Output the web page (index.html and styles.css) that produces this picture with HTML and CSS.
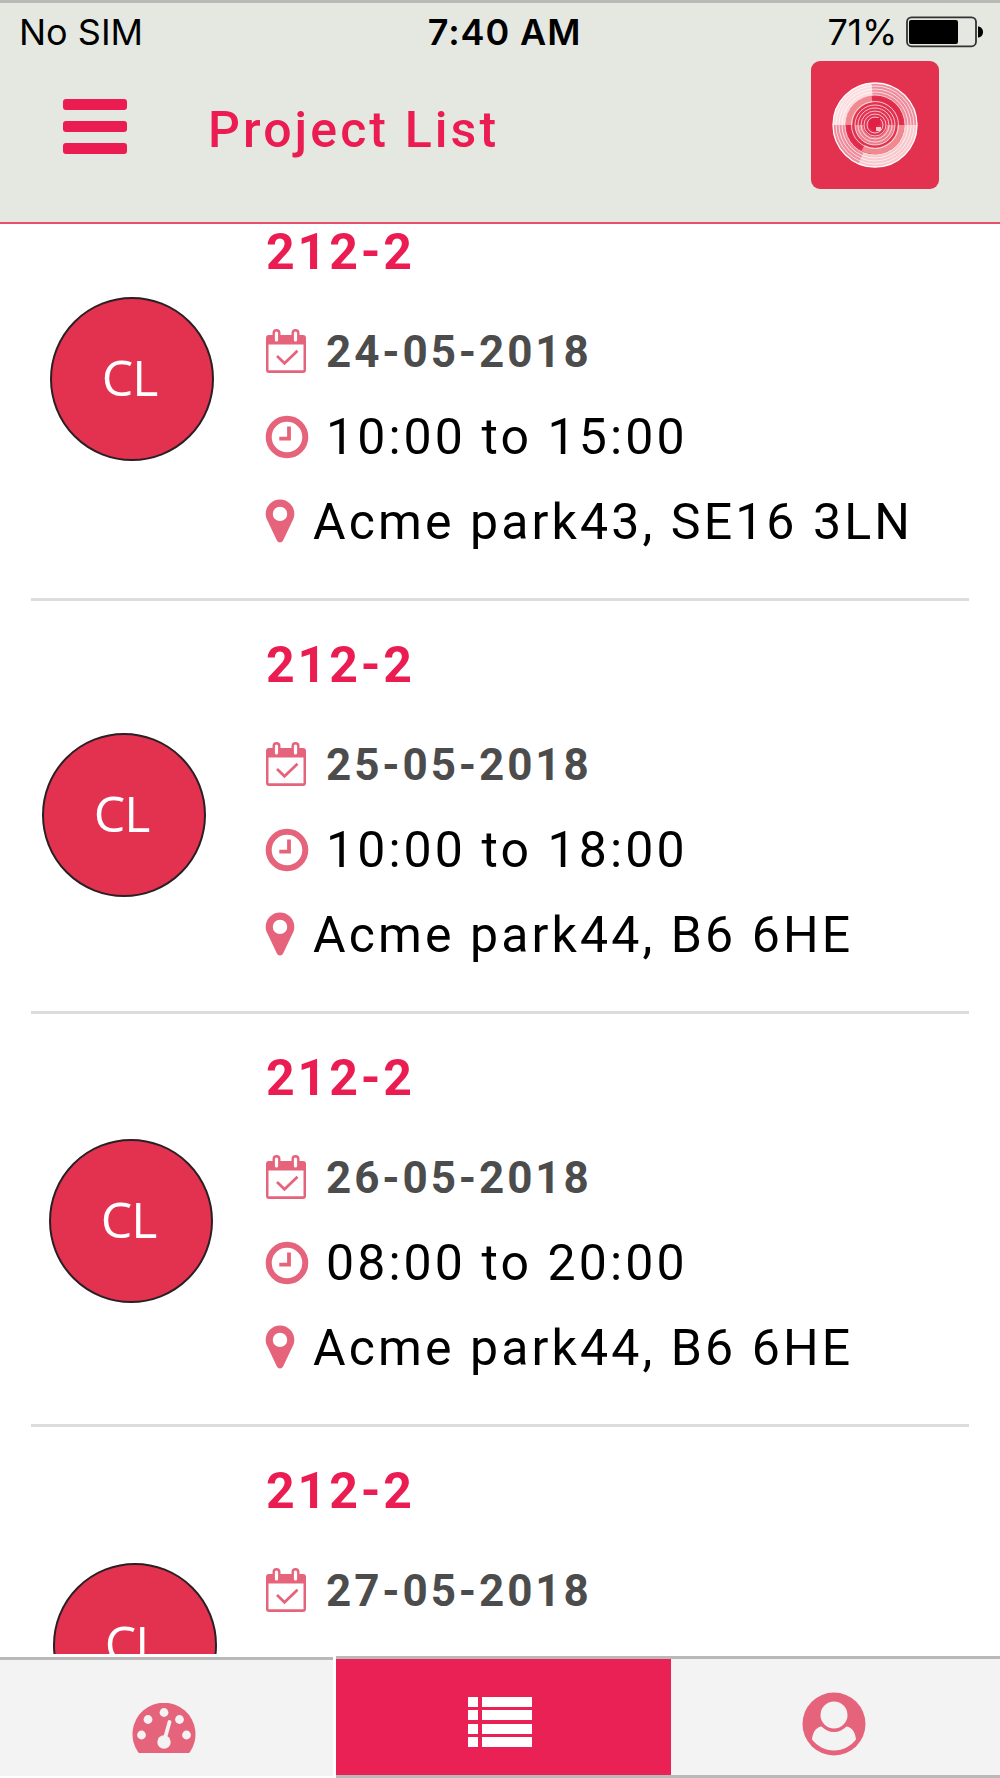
FILE: index.html
```html
<!DOCTYPE html>
<html lang="en">
<head>
<meta charset="utf-8">
<title>Project List</title>
<link rel="stylesheet" href="styles.css">
</head>
<body>
<svg width="0" height="0" class="defs">
  <symbol id="calendar" viewBox="0 0 42 46">
    <path fill-rule="evenodd" d="M3 7H7.500V5a4 4 0 0 1 8 0V7H26.500V5a4 4 0 0 1 8 0V7H38a3 3 0 0 1 3 3V42a3 3 0 0 1-3 3H4a3 3 0 0 1-3-3V10a3 3 0 0 1 2-3zM3.500 16.500V42.300H38.500V16.500zM11.500 3.500a1.600 1.600 0 0 0-1.600 1.600V12a1.600 1.600 0 0 0 3.200 0V5.100a1.600 1.600 0 0 0-1.600-1.600zM30.500 3.500a1.600 1.600 0 0 0-1.600 1.600V12a1.600 1.600 0 0 0 3.200 0V5.100a1.600 1.600 0 0 0-1.600-1.600z"/>
    <path d="M12 28l7.500 7.300L32.500 22.700" fill="none" stroke="currentColor" stroke-width="2.700"/>
  </symbol>
  <symbol id="clock" viewBox="0 0 44 44">
    <circle cx="22" cy="22" r="18.300" fill="none" stroke="currentColor" stroke-width="6"/>
    <path d="M14.300 23.700H24V11.500" fill="none" stroke="currentColor" stroke-width="3.800"/>
  </symbol>
  <symbol id="pin" viewBox="0 0 30 44">
    <path fill-rule="evenodd" d="M15 .500A14.300 14.300 0 0 1 29.300 15c0 3-.8 4.600-1.500 6L18.100 41.500a3.400 3.400 0 0 1-6.200 0L2.200 21C1.500 19.600.7 18 .7 15A14.300 14.300 0 0 1 15 .500zM15 7.700a7.200 7.200 0 1 0 0 14.400a7.200 7.200 0 0 0 0-14.400z"/>
  </symbol>
</svg>

<header class="header">
  <div class="status">
    <span class="carrier">No SIM</span>
    <span class="time">7:40 AM</span>
    <span class="power"><span class="percent">71%</span>
      <svg class="battery" width="78" height="32" viewBox="0 0 78 32">
        <rect x="1" y="1.300" width="69" height="29" rx="4.500" fill="none" stroke="#333" stroke-width="1.800"/>
        <rect x="3" y="4" width="49" height="24" rx="2"/>
        <path d="M72 10.500c3 0 5 2.500 5 5.500s-2 5.500-5 5.500z"/>
      </svg>
    </span>
  </div>
  <div class="toolbar">
    <div class="menu"><i></i><i></i><i></i></div>
    <h1 class="title">Project List</h1>
    <svg class="logo" width="128" height="128" viewBox="0 0 128 128">
      <rect width="128" height="128" rx="9" fill="#e33150"/>
      <g fill="none" stroke="#fff">
        <circle cx="64" cy="64" r="36" stroke="#ef8d9d" stroke-width="12"/>
        <path d="M28 64a36 36 0 0 1 33-36" stroke="#fbdde0" stroke-width="12"/>
        <path d="M100 64a36 36 0 0 1-50 33" stroke="#f8c8cc" stroke-width="12"/>
        <path d="M38 64a26 26 0 0 1 23-26M90 64a26 26 0 0 1-38 23" stroke="#f08a90" stroke-width="7"/>
        <path d="M80 64a16 16 0 0 1-32 0" stroke="#ec7f8d" stroke-width="8"/>
        <circle cx="64" cy="64" r="42" stroke-width="1.300"/>
        <g stroke="#fff" stroke-opacity=".7" stroke-width="1">
          <circle cx="64" cy="64" r="39"/><circle cx="64" cy="64" r="36"/><circle cx="64" cy="64" r="33"/>
          <circle cx="64" cy="64" r="30"/><circle cx="64" cy="64" r="23.500"/>
          <circle cx="64" cy="64" r="20"/><circle cx="64" cy="64" r="17"/><circle cx="64" cy="64" r="14"/>
          <circle cx="64" cy="64" r="11"/><circle cx="64" cy="64" r="8"/>
        </g>
        <path d="M62 37.500a26.500 26.500 0 0 1 28.500 26M37.500 64a26.500 26.500 0 0 0 13 23" stroke="#e02a4b" stroke-width="2.500"/>
      </g>
      <path d="M58 60l4-3h7v7h-3v6h-4l-4-4z" fill="#e02045"/>
      <path d="M65 66h5v4h-5z" fill="#f8c7cb"/>
    </svg>
  </div>
</header>

<main class="list">
  <article class="project">
    <div class="photo"><div class="avatar a1">CL</div></div>
    <div class="info">
      <h2>212-2</h2>
      <p class="date"><svg class="cal"><use href="#calendar"/></svg>24-05-2018</p>
      <p><svg class="clk"><use href="#clock"/></svg>10:00 to 15:00</p>
      <p><svg class="pin"><use href="#pin"/></svg>Acme park43, SE16 3LN</p>
    </div>
  </article>
  <article class="project">
    <div class="photo"><div class="avatar a2">CL</div></div>
    <div class="info">
      <h2>212-2</h2>
      <p class="date"><svg class="cal"><use href="#calendar"/></svg>25-05-2018</p>
      <p><svg class="clk"><use href="#clock"/></svg>10:00 to 18:00</p>
      <p><svg class="pin"><use href="#pin"/></svg>Acme park44, B6 6HE</p>
    </div>
  </article>
  <article class="project">
    <div class="photo"><div class="avatar a3">CL</div></div>
    <div class="info">
      <h2>212-2</h2>
      <p class="date"><svg class="cal"><use href="#calendar"/></svg>26-05-2018</p>
      <p><svg class="clk"><use href="#clock"/></svg>08:00 to 20:00</p>
      <p><svg class="pin"><use href="#pin"/></svg>Acme park44, B6 6HE</p>
    </div>
  </article>
  <article class="project">
    <div class="photo"><div class="avatar a4">CL</div></div>
    <div class="info">
      <h2>212-2</h2>
      <p class="date"><svg class="cal"><use href="#calendar"/></svg>27-05-2018</p>
    </div>
  </article>
</main>

<nav class="tabs">
  <a class="tab dashboard">
    <svg width="64" height="52" viewBox="0 0 64 52">
      <path fill="#e6647b" d="M6 49A31.500 31.500 0 1 1 58 49Q57.500 50 56.500 50H7.500Q6.500 50 6 49z"/>
      <g fill="#f3f3f3"><circle cx="9.500" cy="32" r="4.400"/><circle cx="16" cy="16.500" r="4.400"/><circle cx="32" cy="9.500" r="4.400"/><circle cx="47.500" cy="16.500" r="4.400"/><circle cx="54.500" cy="32" r="4.400"/><circle cx="32" cy="39" r="6.700"/></g>
      <path d="M32.500 37L37.500 19" stroke="#f3f3f3" stroke-width="3.800" stroke-linecap="round"/>
    </svg>
  </a>
  <a class="tab projects">
    <svg width="64" height="50" viewBox="0 0 64 50" fill="#fff">
      <path d="M0 0h10v10H0zM14 0h50v10H14zM0 13h10v10H0zM14 13h50v10H14zM0 27h10v10H0zM14 27h50v10H14zM0 40h10v10H0zM14 40h50v10H14z"/>
    </svg>
  </a>
  <a class="tab account">
    <svg width="64" height="64" viewBox="0 0 64 64">
      <circle cx="32" cy="32" r="31.500" fill="#e6647b"/>
      <circle cx="32" cy="23" r="13.500" fill="#f3f3f3"/>
      <path fill="#f3f3f3" d="M19.500 34.500C13 35.500 10.500 42 10 47.500C15 54 23 58.500 32 58.500S49 54 54 47.500C53.500 42 51 35.500 44.500 34.500C41 38 37 40 32 40S23 38 19.500 34.500z"/>
    </svg>
  </a>
</nav>
</body>
</html>
```
FILE: styles.css
```css
* { box-sizing: border-box; }

body {
  display: flex;
  flex-direction: column;
  margin: 0;
  width: 1000px;
  height: 1778px;
  overflow: hidden;
  background: #fff;
  color: #000;
  font-family: Roboto, "Liberation Sans", sans-serif;
}

.defs { display: none; }

.header {
  flex: none;
  height: 224px;
  background: #e5e8e1;
  border-top: 3px solid #b9bab8;
  border-bottom: 2px solid #e5506c;
}

.status {
  display: grid;
  grid-template-columns: 1fr auto 1fr;
  align-items: center;
  height: 58px;
  padding: 0 16px 0 19px;
  font-family: Inter, "Liberation Sans", sans-serif;
  font-size: 36px;
  line-height: 56px;
}

.carrier { font-weight: 400; letter-spacing: 0; }
.time { padding: 0 0 0 6px; font-weight: 600; letter-spacing: 0.9px; }
.power { display: flex; align-items: center; justify-content: flex-end; gap: 9px; }
.percent { font-weight: 400; letter-spacing: -0.3px; }

.toolbar { display: flex; height: 128px; }

.menu {
  display: flex;
  flex-direction: column;
  gap: 11px;
  width: 64px;
  margin: 38px 82px 0 63px;
}
.menu i { height: 11px; border-radius: 3px; background: #ea1c51; }

.title {
  flex: 1;
  margin: 39px 0 0 -1px;
  color: #ea1c51;
  font-size: 50px;
  font-weight: 500;
  line-height: 60px;
  letter-spacing: 3.1px;
}

.logo { margin-right: 61px; }

.list { flex: none; height: 1430px; overflow: hidden; }

.project {
  display: flex;
  height: 413px;
  margin: 0 31px;
  padding-top: 36px;
  border-bottom: 3px solid #dcdcdc;
}
.project:first-child { height: 377px; padding-top: 0; }
.project:last-child { border: 0; }

.photo { flex: none; width: 235px; }

.avatar {
  width: 164px;
  height: 164px;
  padding-right: 5px;
  border: 2px solid #2a2024;
  border-radius: 50%;
  background: #e33150;
  color: #fff;
  font: 50px/157px "Open Sans", "Noto Sans", sans-serif;
  letter-spacing: -1px;
  text-align: center;
}
.a1 { margin: 73px 0 0 19px; }
.a2 { margin: 96px 0 0 11px; }
.a3 { margin: 89px 0 0 18px; }
.a4 { margin: 100px 0 0 22px; }

.info h2 {
  margin: 0 0 30px;
  color: #ea1c51;
  font-size: 50px;
  font-weight: 700;
  line-height: 56px;
  letter-spacing: 2.9px;
}
.info p {
  display: flex;
  align-items: center;
  height: 85px;
  margin: 0;
  font-size: 50px;
  line-height: 85px;
  letter-spacing: 3.1px;
  white-space: nowrap;
}
.info .date { color: #4c4c4c; font-size: 44px; font-weight: 700; letter-spacing: 2.9px; }
.info svg { flex: none; margin-left: -1px; color: #e6647b; fill: currentColor; }
.info .cal { width: 42px; height: 46px; margin: -4px 19px 0 -1px; }
.info .clk { width: 44px; height: 44px; margin: -2px 17px 0 -1px; }
.info .pin { width: 30px; height: 44px; margin: -3px 18px 0 -1px; }

.tabs {
  display: grid;
  grid-template-columns: 333px 338px 1fr;
  flex: none;
  height: 122px;
  margin-top: 2px;
}
.tab {
  display: flex;
  justify-content: center;
  background: #f3f3f3;
  border-top: 3px solid #b9b9b9;
}
.dashboard { height: 119px; margin-top: 1px; padding: 43px 5px 0 0; }
.projects { margin-left: 3px; padding: 38px 7px 0 0; background: #ea2154; border-bottom: 3px solid #b9b9b9; }
.account { padding: 33px 3px 0 0; border-bottom: 3px solid #b9b9b9; }
```
